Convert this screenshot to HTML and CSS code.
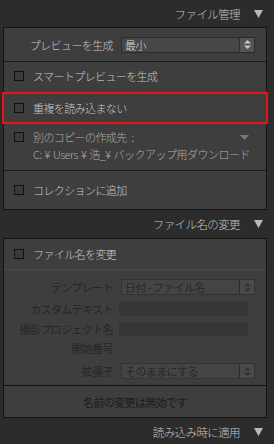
FILE: index.html
```html
<!DOCTYPE html>
<html lang="ja">
<head>
    <meta charset="UTF-8">
    <title>読み込み設定</title>
    <link rel="stylesheet" href="styles.css">
</head>
<body>

    <div class="sidebar">
        <div class="header">
            <span>ファイル管理</span>
            <svg class="tri" width="9" height="8" viewBox="0 0 9 8"><path d="M0 0H9L4.5 8Z" fill="#b8b8b8"/></svg>
        </div>
        <div class="panel">
            <div class="section sec-preview">
                <div class="field">
                    <span class="lbl">プレビューを生成</span>
                    <div class="select">
                        <span class="val">最小</span>
                        <span class="spin"><svg width="7" height="9" viewBox="0 0 7 9"><path d="M3.5 0L7 3.5H0Z M3.5 9L0 5.5H7Z" fill="#c8c8c8"/></svg></span>
                    </div>
                </div>
            </div>
            <div class="section sec-options">
                <div class="check-row"><span class="box"></span>スマートプレビューを生成</div>
                <div class="check-row marked"><span class="box"></span>重複を読み込まない</div>
                <div class="check-row copy">
                    <span class="box"></span><span class="dim">別のコピーの作成先 :</span>
                    <svg class="drop" width="9" height="5" viewBox="0 0 9 5"><path d="M0 0H9L4.5 5Z" fill="#7a7a7a"/></svg>
                </div>
                <div class="path">C: ¥ Users ¥ 浩_¥ バックアップ用ダウンロード</div>
            </div>
            <div class="section sec-collection">
                <div class="check-row"><span class="box"></span>コレクションに追加</div>
            </div>
        </div>

        <div class="header">
            <span>ファイル名の変更</span>
            <svg class="tri" width="9" height="8" viewBox="0 0 9 8"><path d="M0 0H9L4.5 8Z" fill="#b8b8b8"/></svg>
        </div>
        <div class="panel">
            <div class="section sec-rename">
                <div class="check-row"><span class="box"></span>ファイル名を変更</div>
            </div>
            <div class="section sec-fields off">
                <div class="field f-template">
                    <span class="lbl">テンプレート</span>
                    <div class="select">
                        <span class="val">日付 - ファイル名</span>
                        <span class="spin"><svg width="7" height="9" viewBox="0 0 7 9"><path d="M3.5 0L7 3.5H0Z M3.5 9L0 5.5H7Z" fill="#333"/></svg></span>
                    </div>
                </div>
                <div class="field f-text">
                    <span class="lbl">カスタムテキスト</span>
                    <div class="input"></div>
                </div>
                <div class="field f-text">
                    <span class="lbl">撮影プロジェクト名</span>
                    <div class="input"></div>
                </div>
                <div class="field f-start">
                    <span class="lbl">開始番号</span>
                </div>
                <div class="field f-ext">
                    <span class="lbl">拡張子</span>
                    <div class="select">
                        <span class="val">そのままにする</span>
                        <span class="spin"><svg width="7" height="9" viewBox="0 0 7 9"><path d="M3.5 0L7 3.5H0Z M3.5 9L0 5.5H7Z" fill="#333"/></svg></span>
                    </div>
                </div>
            </div>
            <div class="message">名前の変更は無効です</div>
        </div>

        <div class="header">
            <span>読み込み時に適用</span>
            <svg class="tri" width="9" height="8" viewBox="0 0 9 8"><path d="M0 0H9L4.5 8Z" fill="#b8b8b8"/></svg>
        </div>
    </div>

</body>
</html>
```

FILE: styles.css
```css
body {
    margin: 0;
    background-color: #2c2c2c;
    font-family: "Noto Sans CJK JP", "DejaVu Sans", sans-serif;
    font-weight: 300;
    font-size: 11px;
    letter-spacing: -0.6px;
    color: #c8c8c8;
}

.sidebar {
    width: 274px;
    height: 444px;
    overflow: hidden;
}

.header {
    height: 27px;
    display: flex;
    align-items: center;
    justify-content: flex-end;
    padding-right: 11px;
    color: #c2c2c2;
    font-size: 11.5px;
}

.header .tri {
    margin-left: 14px;
}

.panel + .header {
    height: 28px;
}

.panel {
    margin-left: 3px;
    width: 262px;
    border: 1px solid #151515;
    background-color: #3e3e3e;
}

.section {
    border-bottom: 1px solid #1c1c1c;
}

.section:last-child {
    border-bottom: none;
}

.sec-preview {
    height: 33px;
    display: flex;
    align-items: center;
}

.sec-options {
    padding-bottom: 8px;
}

.sec-collection {
    height: 38px;
    display: flex;
    align-items: center;
}

.field {
    display: flex;
    align-items: center;
}

.lbl {
    width: 109px;
    text-align: right;
    margin-right: 8px;
    white-space: nowrap;
}

.select {
    width: 132px;
    height: 14px;
    border: 1px solid #2a2a2a;
    background-color: #474747;
    display: flex;
    align-items: center;
    color: #dcdcdc;
}

.select .val {
    flex: 1;
    padding-left: 3px;
}

.select .spin {
    width: 14px;
    height: 14px;
    border-left: 1px solid #2e2e2e;
    background-color: #555;
    display: flex;
    align-items: center;
    justify-content: center;
}

.check-row {
    display: flex;
    align-items: center;
    height: 28px;
    padding-left: 10px;
    white-space: nowrap;
}

.box {
    width: 8px;
    height: 8px;
    border: 1px solid #111;
    background-color: #3a3a3a;
    margin-right: 9px;
    flex: none;
}

.check-row.marked {
    margin-top: 4px;
    outline: 2px solid #e8121a;
}

.check-row.copy {
    height: 18px;
    margin-top: 6px;
}

.dim {
    color: #acacac;
    word-spacing: 3px;
}

.check-row .drop {
    margin-left: auto;
    margin-right: 17px;
}

.path {
    height: 16px;
    line-height: 16px;
    padding-left: 29px;
    color: #acacac;
    letter-spacing: -0.5px;
    word-spacing: 1px;
    white-space: nowrap;
}

.sec-rename {
    border-bottom-color: #4a4a4a;
}

.sec-rename .check-row {
    height: 30px;
}

.sec-fields {
    padding-top: 9px;
    padding-bottom: 6px;
    border-bottom-color: #111;
}

.off {
    color: #262626;
    font-weight: 400;
}

.off .select {
    color: #282828;
    background-color: #444;
    border-color: #333;
}

.off .select .spin {
    background-color: #4a4a4a;
}

.f-text {
    margin-top: 6px;
}

.f-text + .f-text {
    margin-top: 4px;
}

.input {
    width: 129px;
    height: 14px;
    margin-left: -2px;
    background-color: #363636;
}

.f-start {
    height: 14px;
    margin-top: 4px;
}

.f-ext {
    margin-top: 8px;
}

.message {
    height: 31px;
    display: flex;
    align-items: center;
    justify-content: center;
    color: #1c1c1c;
    font-weight: 400;
}
```
